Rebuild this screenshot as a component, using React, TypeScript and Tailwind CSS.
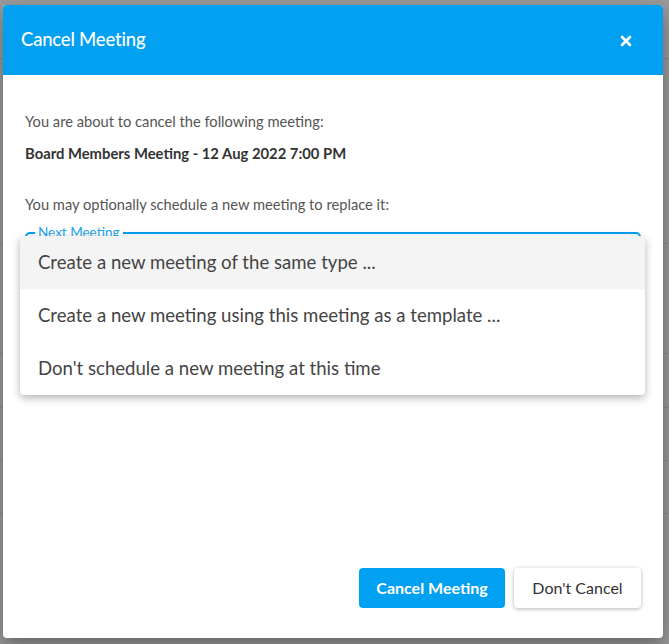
const items = [
  "Create a new meeting of the same type ...",
  "Create a new meeting using this meeting as a template ...",
  "Don't schedule a new meeting at this time",
];

const App = () => {
  return (
    <div className="relative h-[644px] w-[669px] overflow-hidden bg-[#9a9a9a] font-['Lato',sans-serif]">
      {/* faint lines of the page behind the backdrop */}
      <div className="absolute left-0 right-0 top-[58px] h-px bg-[#8a8a8a]" />
      <div className="absolute left-0 right-0 top-[243px] h-px bg-[#8c8c8c]" />
      <div className="absolute left-0 right-0 top-[353px] h-px bg-[#8c8c8c]" />
      <div className="absolute left-0 right-0 top-[407px] h-px bg-[#8c8c8c]" />
      <div className="absolute left-0 right-0 top-[460px] h-px bg-[#8c8c8c]" />
      <div className="absolute left-0 right-0 top-[513px] h-px bg-[#8c8c8c]" />

      <div className="absolute left-[3px] top-[5px] flex h-[633px] w-[660px] flex-col overflow-hidden rounded-[4px] bg-white shadow-[0_8px_20px_rgba(0,0,0,0.35)]">
        <div className="flex h-[70px] shrink-0 items-center justify-between bg-[#02a0f0] pl-[18px] pr-[31px]">
          <h2 className="text-[18.5px] font-medium tracking-[-0.2px] text-white">Cancel Meeting</h2>
          <svg width="12" height="12" viewBox="0 0 12 12" className="mt-[1px]">
            <path d="M2 2 L10 10 M10 2 L2 10" stroke="white" strokeWidth="2.6" strokeLinecap="round" />
          </svg>
        </div>

        <div className="flex flex-1 flex-col px-[22px] pt-[37px]">
          <p className="text-[14.7px] leading-[18px] text-[#555]">You are about to cancel the following meeting:</p>
          <p className="mt-[14px] text-[14.8px] font-bold leading-[18px] text-[#333]">
            Board Members Meeting - 12 Aug 2022 7:00 PM
          </p>
          <p className="mt-[33px] text-[14.7px] leading-[18px] text-[#555]">
            You may optionally schedule a new meeting to replace it:
          </p>

          <div className="relative mt-[19px] h-[50px] rounded-[5px] border-2 border-[#02a0f0]">
            <span className="absolute -top-[11px] left-[8px] bg-white px-[3px] text-[13.5px] leading-[18px] text-[#1aa3ee]">
              Next Meeting
            </span>
            <div className="absolute -left-[7px] -right-[6px] top-[2px] z-10 overflow-hidden rounded-[4px] bg-white shadow-[0_3px_8px_rgba(0,0,0,0.3)]">
              {items.map((t, i) => (
                <div
                  key={t}
                  className={`flex h-[53px] items-center px-[18px] text-[18.6px] text-[#444] ${i === 0 ? "bg-[#f4f4f4]" : ""}`}
                >
                  {t}
                </div>
              ))}
            </div>
          </div>

          <div className="mt-auto mb-[30px] flex justify-end gap-[9px]">
            <button className="h-[40px] w-[146px] rounded-[4px] bg-[#02a0f0] text-[16px] font-bold text-white">
              Cancel Meeting
            </button>
            <button className="h-[40px] w-[127px] rounded-[4px] bg-white text-[16px] text-[#333] shadow-[0_1px_4px_rgba(0,0,0,0.3)]">
              Don't Cancel
            </button>
          </div>
        </div>
      </div>
    </div>
  );
};

export default App;
